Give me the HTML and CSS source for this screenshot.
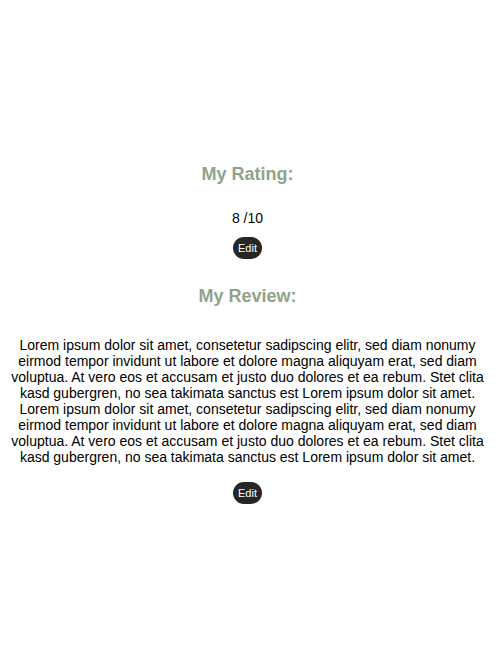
FILE: index.html
```html
<!DOCTYPE html>
<html>
<head>
<meta charset="utf-8">
<link rel="stylesheet" href="styles.css">
</head>
<body>
<main class="page">
  <section class="block rating">
    <h3 class="title">My Rating:</h3>
    <p class="score">8 /10</p>
    <button class="edit">Edit</button>
  </section>
  <section class="block review">
    <h3 class="title">My Review:</h3>
    <p class="text">Lorem ipsum dolor sit amet, consetetur sadipscing elitr, sed diam nonumy eirmod tempor invidunt ut labore et dolore magna aliquyam erat, sed diam voluptua. At vero eos et accusam et justo duo dolores et ea rebum. Stet clita kasd gubergren, no sea takimata sanctus est Lorem ipsum dolor sit amet. Lorem ipsum dolor sit amet, consetetur sadipscing elitr, sed diam nonumy eirmod tempor invidunt ut labore et dolore magna aliquyam erat, sed diam voluptua. At vero eos et accusam et justo duo dolores et ea rebum. Stet clita kasd gubergren, no sea takimata sanctus est Lorem ipsum dolor sit amet.</p>
    <button class="edit">Edit</button>
  </section>
</main>
</body>
</html>
```

FILE: styles.css
```css
html, body {
  margin: 0;
  background: #ffffff;
}
body {
  padding: 0 14px 0 8px;
  font-family: "Liberation Sans", Arial, Helvetica, sans-serif;
  color: #000;
}
.page {
  display: flex;
  flex-direction: column;
  align-items: center;
  text-align: center;
  padding-top: 163px;
}
.block {
  display: flex;
  flex-direction: column;
  align-items: center;
  width: 100%;
}
.title {
  margin: 0;
  font-size: 18px;
  line-height: 22px;
  font-weight: bold;
  color: #8fa38a;
}
.score {
  margin: 25px 0 11px;
  font-size: 14px;
  line-height: 16px;
}
.edit {
  height: 22px;
  padding: 0 5px;
  border: none;
  border-radius: 11px;
  background: #262626;
  color: #fff;
  font-family: "Liberation Sans", Arial, sans-serif;
  font-size: 11px;
  line-height: 22px;
  cursor: pointer;
}
.review {
  margin-top: 26px;
}
.text {
  margin: 30px 0 17px;
  font-size: 14px;
  line-height: 16px;
}
```
